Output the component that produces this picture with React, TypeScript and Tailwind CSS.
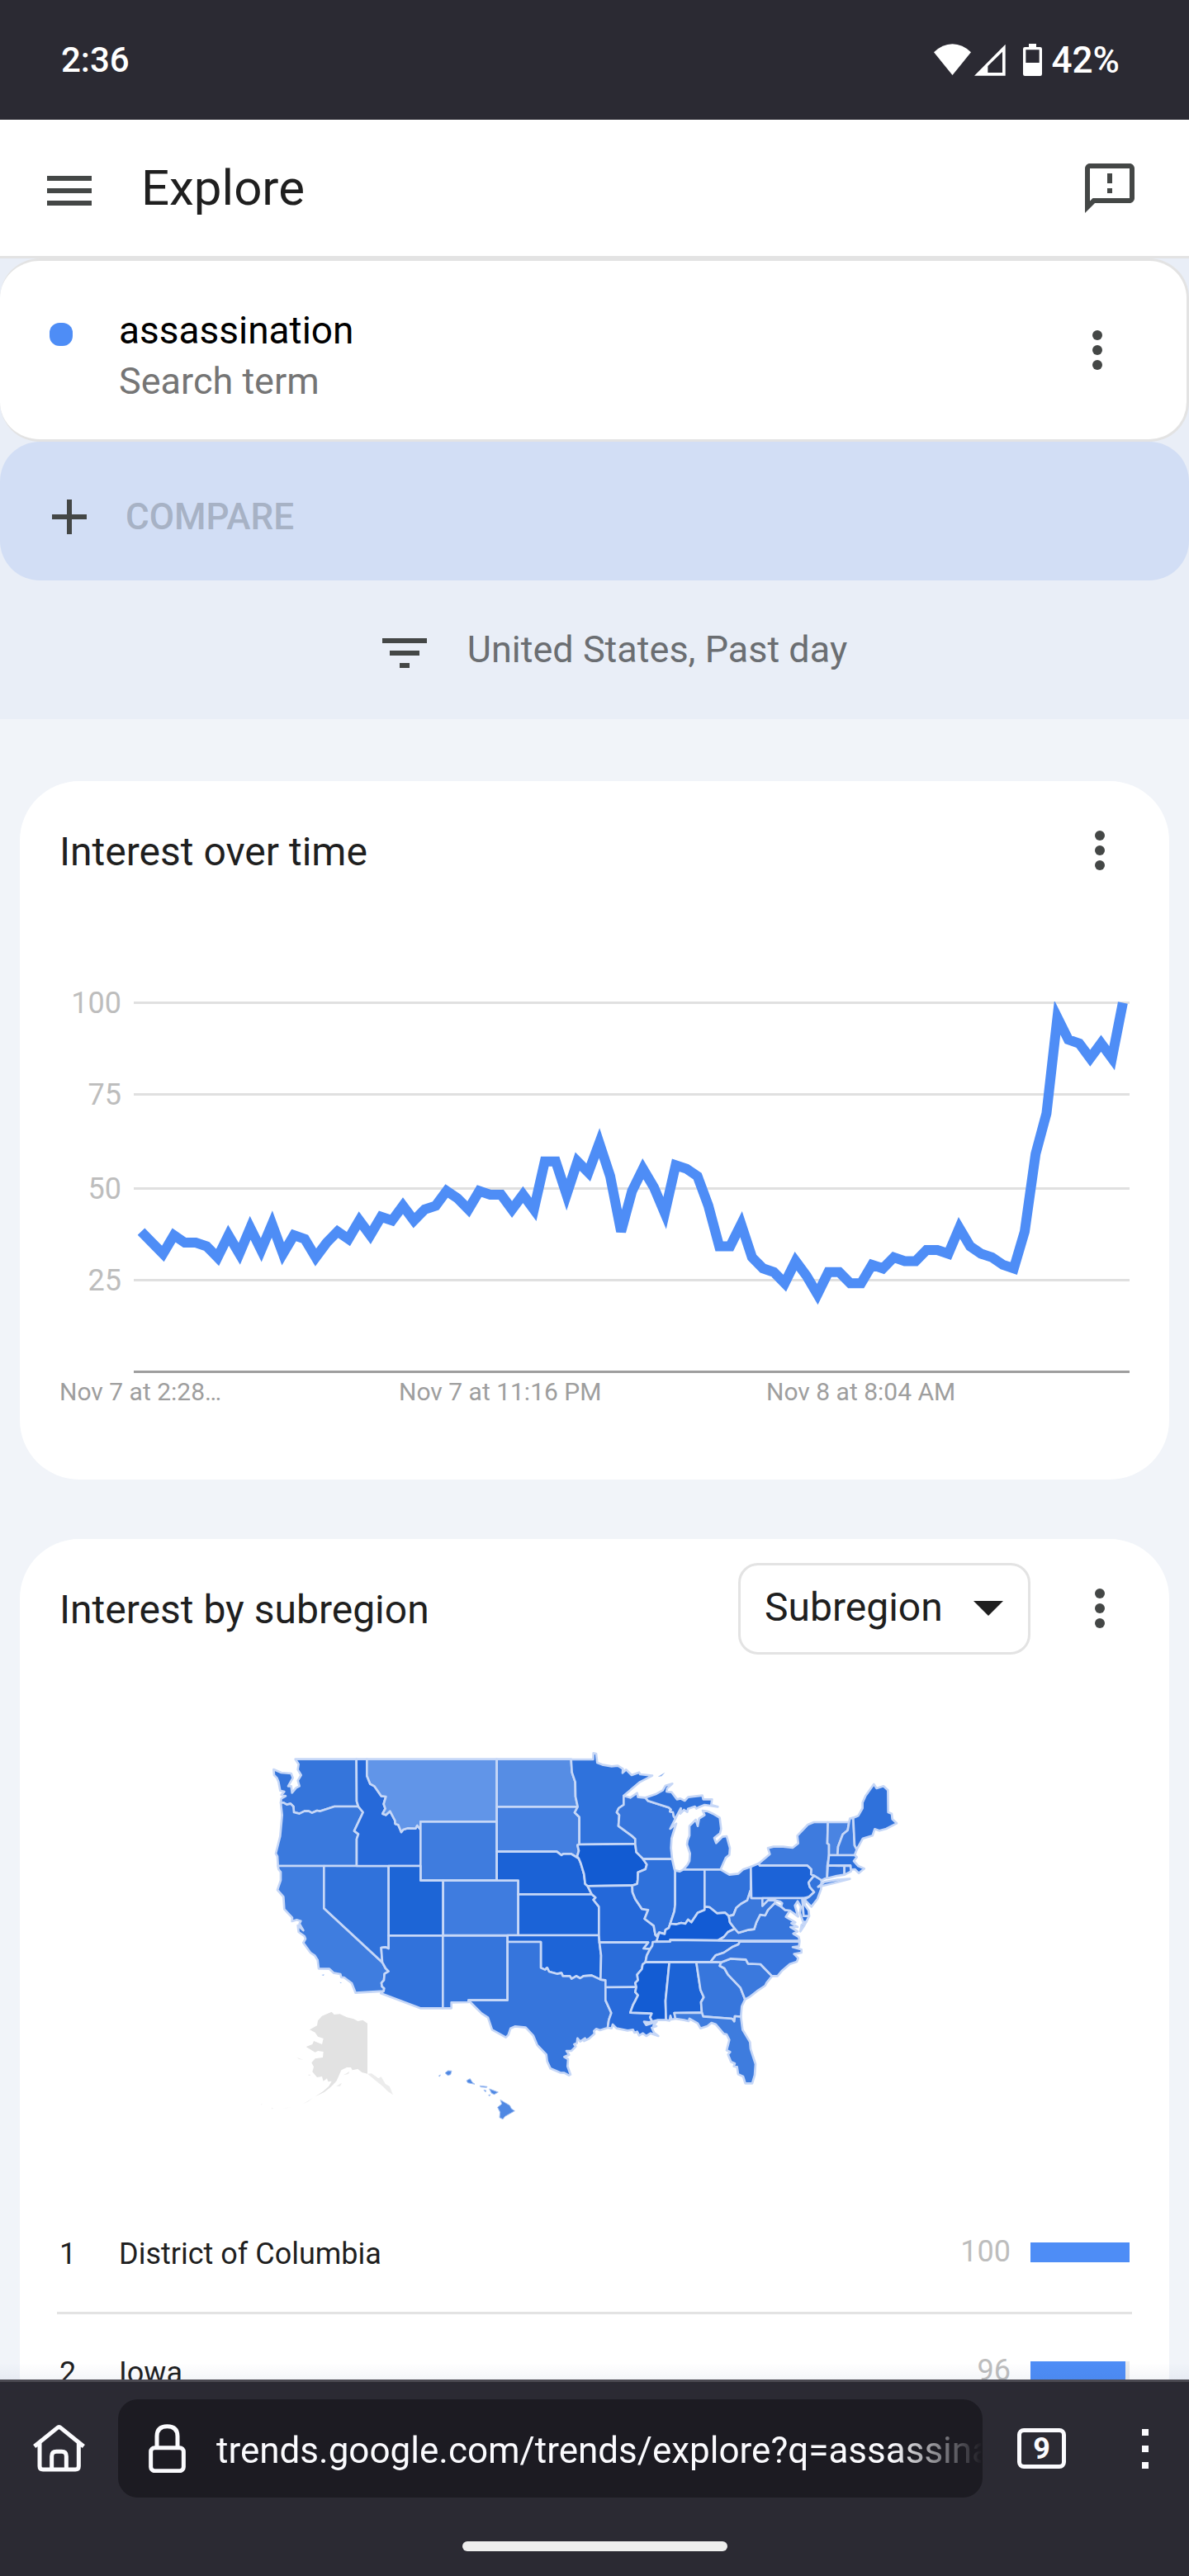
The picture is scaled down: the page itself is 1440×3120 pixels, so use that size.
const interest = [
  38, 35, 32, 37, 35, 35, 34, 31, 37, 32, 39, 33, 40, 32, 37, 36, 31, 35, 38, 36, 41, 37, 42, 41, 45, 41, 44, 45, 49, 47,
  44, 49, 48, 48, 44, 48, 44, 57, 57, 48, 57, 54, 62, 53, 38, 49, 55, 50, 43, 56, 55, 53, 45, 34, 34, 40, 31, 28, 27, 24,
  30, 26, 21, 27, 27, 24, 24, 29, 28, 31, 30, 30, 33, 33, 32, 39, 34, 32, 31, 29, 28, 38, 59, 70, 96, 90, 89, 85, 89, 85,
  100,
];

const gridLines = [
  { value: 100, y: 99 },
  { value: 75, y: 210 },
  { value: 50, y: 324 },
  { value: 25, y: 435 },
];

const timeLabels = [
  { x: 0, text: "Nov 7 at 2:28…" },
  { x: 411, text: "Nov 7 at 11:16 PM" },
  { x: 856, text: "Nov 8 at 8:04 AM" },
];

type Region = { id: string; fill: string; d: string };

const westStates: Region[] = [
  { id: "WA", fill: "#3575db", d: "M143,92 365,92 366,245 372,264 285,264 232,281 222,279 203,287 192,281 176,281 158,290 138,285 136,264 126,254 112,257 100,250 90,250 92,235 108,226 92,222 103,210 88,206 82,175 76,160 66,150 64,129 92,141 128,144 134,160 117,190 128,190 131,214 146,196 158,190 152,170 164,150 152,130 155,110Z" },
  { id: "OR", fill: "#3a79dd", d: "M90,250 100,250 112,257 126,254 136,264 138,285 158,290 176,281 192,281 203,287 222,279 232,281 285,264 372,264 389,285 357,353 372,364 366,382 366,480 80,480 78,445 72,435 88,372 95,295Z" },
  { id: "CA", fill: "#3f7ddf", d: "M80,480 247,480 247,634 459,830 471,852 482,863 467,872 465,895 456,905 458,918 466,925 464,935 362,941 348,906 320,885 310,885 307,873 283,869 267,854 228,853 224,822 214,806 198,795 172,759 180,745 176,735 155,720 152,696 172,714 158,690 163,680 148,676 131,681 132,668 103,637 100,592 78,567 90,532 90,502 82,492Z" },
  { id: "NV", fill: "#3072db", d: "M247,480 482,480 482,780 470,775 455,777 459,830 247,634Z" },
  { id: "ID", fill: "#2669d9", d: "M365,92 403,92 403,152 415,182 430,190 455,226 472,228 464,255 470,272 460,290 472,295 487,281 505,315 506,327 517,331 528,357 535,348 552,343 580,344 586,333 598,348 598,480 366,480 366,382 372,364 357,353 389,285 372,264 366,245Z" },
  { id: "MT", fill: "#6195e8", d: "M403,92 875,92 875,319 598,319 598,348 586,333 580,344 552,343 535,348 528,357 517,331 506,327 505,315 487,281 472,295 460,290 470,272 464,255 472,228 455,226 430,190 415,182 403,152Z" },
  { id: "WY", fill: "#3f7cde", d: "M598,319 875,319 875,533 598,533Z" },
  { id: "UT", fill: "#1d65d6", d: "M482,480 598,480 598,533 680,533 680,733 482,733Z" },
  { id: "CO", fill: "#3f7cdf", d: "M680,533 953,533 953,732 680,732Z" },
  { id: "AZ", fill: "#3172db", d: "M482,733 679,733 679,997 597,997 454,943 464,935 466,925 458,918 456,905 465,895 467,872 482,863 471,852 459,830 455,777 470,775 482,780Z" },
  { id: "NM", fill: "#3575dc", d: "M679,733 914,733 914,968 772,968 772,975 710,976 710,997 679,997Z" },
  { id: "ND", fill: "#568de4", d: "M875,92 1145,92 1148,140 1160,175 1161,228 1169,265 875,265Z" },
  { id: "SD", fill: "#447fe0", d: "M875,265 1169,265 1158,286 1175,302 1175,402 1168,404 1173,425 1167,445 1173,453 1145,436 1117,436 1110,441 1093,428 875,428Z" },
  { id: "NE", fill: "#1b62d6", d: "M875,428 1093,428 1110,441 1117,436 1145,436 1173,453 1180,470 1192,510 1196,545 1205,553 1220,583 953,583 953,533 875,533Z" },
  { id: "KS", fill: "#1b63d7", d: "M953,583 1220,583 1234,595 1226,603 1246,628 1246,732 953,732Z" },
  { id: "OK", fill: "#1d64d7", d: "M914,732 1246,732 1248,758 1254,805 1252,893 1220,878 1190,880 1178,888 1164,880 1147,890 1140,880 1115,880 1110,869 1095,872 1065,864 1058,850 1050,857 1035,850 1035,756 914,756Z" },
  { id: "TX", fill: "#3675dc", d: "M914,756 1035,756 1035,850 1050,857 1058,850 1065,864 1095,872 1110,869 1115,880 1140,880 1147,890 1164,880 1178,888 1190,880 1220,878 1252,893 1270,895 1270,968 1291,1014 1282,1040 1278,1068 1250,1077 1236,1072 1228,1080 1230,1090 1210,1108 1192,1116 1196,1106 1178,1118 1168,1106 1166,1124 1156,1128 1162,1136 1146,1152 1128,1152 1138,1166 1120,1174 1134,1182 1132,1208 1143,1238 1137,1241 1120,1232 1105,1231 1070,1216 1058,1190 1055,1165 1022,1131 1008,1097 980,1067 942,1063 925,1070 917,1094 908,1103 858,1075 843,1031 820,1016 779,975 772,968 914,968Z" },
  { id: "HI", fill: "#4f88e3", d: "M888,1330 905,1340 922,1350 928,1362 940,1370 905,1390 897,1400 885,1394 887,1375 878,1357 893,1345ZM848,1290 864,1296 880,1302 866,1310 856,1306ZM765,1260 778,1253 786,1266 795,1273 770,1268ZM687,1232 698,1224 711,1225 707,1238 697,1241ZM814,1279 840,1282 838,1285 816,1283ZM828,1294 836,1296 834,1301ZM664,1243 670,1239 667,1245ZM845,1313 852,1311 848,1316Z" },
];

const eastStates: Region[] = [
  { id: "MN", fill: "#2f72dc", d: "M-25,93 55,93 56,70 66,72 70,105 88,112 105,115 122,118 145,116 163,127 162,142 175,130 195,150 222,140 226,147 270,152 225,175 172,220 166,225 166,258 148,270 141,285 150,295 147,335 195,370 208,382 208,400 5,402 5,302 -12,286 -1,265 -9,228 -10,175 -22,140Z" },
  { id: "IA", fill: "#125bd2", d: "M5,402 208,400 212,430 235,450 250,475 245,492 218,503 217,530 215,545 197,551 35,553 26,545 22,510 10,470 3,453 -3,445 3,425 -2,404Z" },
  { id: "MO", fill: "#2468d9", d: "M35,553 197,551 198,575 208,600 232,636 255,640 242,672 275,697 281,730 292,740 285,755 272,758 270,770 262,782 238,780 255,758 78,758 76,731 76,628 56,603 64,595 50,583Z" },
  { id: "AR", fill: "#2a6cd9", d: "M78,758 255,758 238,780 262,782 250,805 245,830 235,838 232,855 215,875 218,895 208,905 212,920 100,921 100,895 82,893 84,805Z" },
  { id: "LA", fill: "#276ada", d: "M100,921 212,920 208,938 218,950 208,970 200,985 190,1013 268,1016 262,1030 270,1045 258,1048 240,1046 248,1058 262,1054 286,1046 274,1060 285,1062 268,1068 276,1085 292,1098 264,1088 248,1098 236,1088 222,1096 215,1082 205,1086 200,1075 180,1078 140,1070 126,1056 122,1070 108,1068 112,1040 121,1014 100,968Z" },
  { id: "WI", fill: "#3675dc", d: "M166,225 190,232 215,215 218,230 245,232 255,244 330,268 338,275 334,282 345,285 348,300 354,308 335,345 357,326 346,360 340,380 338,415 342,455 235,453 212,430 208,400 208,382 195,370 147,335 150,295 141,285 148,270 166,258Z" },
  { id: "MI-upper", fill: "#3072db", d: "M245,232 285,218 308,205 318,188 343,181 324,198 322,210 340,212 360,238 372,235 388,243 400,230 452,224 455,238 487,238 484,258 508,265 460,258 440,266 430,272 425,264 400,272 397,284 385,276 372,290 374,270 358,300 354,308 348,300 345,285 334,282 338,275 330,268 255,244Z" },
  { id: "MI-lower", fill: "#3474db", d: "M383,493 398,475 405,462 407,435 396,402 398,388 405,370 405,335 428,312 435,335 440,308 460,295 453,279 472,282 490,290 515,305 520,345 516,362 495,378 502,397 525,374 540,372 552,415 550,440 537,450 518,493Z" },
  { id: "IL", fill: "#2f71db", d: "M235,454 342,455 350,490 353,500 353,620 350,645 335,690 330,705 318,712 315,727 295,722 285,735 281,730 275,697 242,672 255,640 232,636 208,600 198,575 197,551 215,545 217,530 218,503 245,492 250,475Z" },
  { id: "IN", fill: "#266ad9", d: "M353,496 370,500 383,493 460,493 460,640 435,650 412,685 400,675 390,690 375,687 356,692 335,690 350,645 353,620Z" },
  { id: "OH", fill: "#3172db", d: "M460,493 518,493 550,512 583,508 600,493 628,483 628,570 615,605 592,618 575,632 565,658 548,662 535,650 505,652 478,630 460,628Z" },
  { id: "KY", fill: "#125bd4", d: "M335,690 356,692 375,687 390,690 400,675 412,685 435,650 460,640 460,628 478,630 505,652 535,650 548,662 552,685 570,708 545,720 530,738 510,750 335,749 335,755 285,755 295,722 315,727 318,712 330,705Z" },
  { id: "TN", fill: "#2a6dda", d: "M272,756 335,755 335,749 588,752 583,765 560,775 530,795 500,805 482,828 245,830 250,805 262,782 270,770Z" },
  { id: "MS", fill: "#135cd3", d: "M245,830 332,830 318,970 320,1040 290,1040 270,1045 262,1030 268,1016 190,1013 200,985 208,970 218,950 208,938 212,920 208,905 218,895 215,875 232,855 235,838Z" },
  { id: "AL", fill: "#1c63d6", d: "M332,830 430,830 445,930 457,957 447,975 450,1013 350,1014 354,1035 340,1038 336,1024 333,1042 320,1040 318,970Z" },
  { id: "GA", fill: "#3776dc", d: "M430,830 520,830 515,843 532,852 545,875 590,922 607,965 595,990 592,1028 570,1026 568,1045 560,1035 455,1027 450,1013 447,975 457,957 445,930Z" },
  { id: "FL", fill: "#3e7cde", d: "M350,1014 450,1013 455,1027 560,1035 568,1045 570,1026 592,1028 598,1075 625,1120 627,1145 645,1200 642,1240 633,1270 608,1270 600,1245 582,1237 578,1210 566,1208 570,1198 556,1192 545,1165 553,1156 540,1150 550,1112 540,1092 530,1090 500,1055 485,1050 470,1062 445,1070 435,1052 405,1035 402,1044 385,1040 354,1035Z" },
  { id: "SC", fill: "#3b79dd", d: "M520,830 555,817 610,820 618,835 663,837 705,880 685,905 680,915 650,935 625,955 607,965 590,922 545,875 532,852 515,843Z" },
  { id: "NC", fill: "#3775dd", d: "M588,755 805,755 803,772 780,775 812,784 812,795 785,800 800,815 795,828 770,836 740,862 725,880 705,880 663,837 618,835 610,820 555,817 520,830 482,828 500,805 530,795 560,775 583,765Z" },
  { id: "VA", fill: "#3675dc", d: "M510,750 530,738 545,720 570,708 583,723 620,712 640,710 648,685 662,657 680,660 690,640 715,615 738,628 752,640 770,642 755,665 790,685 775,688 798,702 772,702 798,718 782,726 802,738 805,751 588,752ZM830,682 820,700 808,718 812,695Z" },
  { id: "WV", fill: "#3a78dc", d: "M548,662 565,658 575,632 592,618 615,605 626,570 630,597 670,597 670,625 690,605 718,605 715,615 690,640 680,660 662,657 648,685 640,710 620,712 583,723 570,708 552,685Z" },
  { id: "PA", fill: "#1c63d7", d: "M628,483 658,470 660,478 833,478 848,492 847,510 858,515 838,540 842,556 858,575 840,592 820,597 630,597Z" },
  { id: "MD", fill: "#3072db", d: "M670,597 815,597 820,662 840,662 830,682 818,684 806,650 810,628 798,608 788,624 800,664 770,642 752,640 738,628 742,615 735,610 718,605 690,605 670,625Z" },
  { id: "DE", fill: "#2267d8", d: "M815,597 823,597 824,622 838,642 840,662 820,662Z" },
  { id: "NJ", fill: "#3274dc", d: "M858,515 885,530 883,565 870,600 848,628 823,602 840,592 858,575 842,556 838,540Z" },
  { id: "NY", fill: "#3e7bde", d: "M658,470 697,437 690,415 710,410 745,410 780,414 800,398 797,370 835,330 857,321 908,321 906,398 912,402 912,441 906,480 905,522 885,532 858,515 847,510 848,492 833,478 660,478ZM872,556 895,538 945,530 988,527 930,542 890,552Z" },
  { id: "VT", fill: "#4a84e2", d: "M908,321 985,321 980,350 962,365 945,410 943,441 912,441 912,402 906,398Z" },
  { id: "NH", fill: "#3f7de0", d: "M985,321 988,308 1000,305 1005,405 1013,420 1005,441 943,441 945,410 962,365 980,350Z" },
  { id: "ME", fill: "#2f71db", d: "M1000,305 1018,298 1034,270 1034,250 1045,225 1075,183 1085,198 1110,190 1126,205 1127,285 1140,290 1142,310 1158,325 1120,345 1095,352 1078,346 1070,370 1035,380 1013,420 1005,405Z" },
  { id: "MA", fill: "#2c70dc", d: "M912,441 1005,441 1013,448 1002,462 1018,480 1040,490 1020,506 1006,492 990,494 990,478 908,478Z" },
  { id: "CT", fill: "#3172db", d: "M908,478 968,480 968,512 940,516 905,525Z" },
  { id: "RI", fill: "#3172db", d: "M968,480 990,480 992,500 968,512Z" },
];

const subregions = [
  { rank: 1, name: "District of Columbia", value: 100 },
  { rank: 2, name: "Iowa", value: 96 },
];

function MoreButton({ label }: { label: string }) {
  return (
    <button type="button" aria-label={label} className="shrink-0 text-[#444746]">
      <svg viewBox="0 0 24 24" className="size-[72px]" fill="currentColor">
        <circle cx="12" cy="6" r="2" />
        <circle cx="12" cy="12" r="2" />
        <circle cx="12" cy="18" r="2" />
      </svg>
    </button>
  );
}

function StatusBar() {
  return (
    <div className="flex h-[145px] shrink-0 items-center justify-between bg-[#2b2a33] pr-[84px] pl-[74px] font-medium text-white">
      <span className="text-[42px]">2:36</span>
      <div className="flex items-center">
        <svg viewBox="87 99 135 117" className="h-[39px] w-[45px]" fill="currentColor">
          <path d="M154.500 213 87 130Q118 100 154.500 100Q191 100 222 130Z" />
        </svg>
        <svg viewBox="234 99 114 117" className="ml-1 h-[39px] w-[38px]" fill="currentColor" fillRule="evenodd">
          <path d="M347 101V215H234ZM336 128 283 180V204H336Z" />
        </svg>
        <svg viewBox="411 99 69 117" className="mr-3 ml-[21px] h-[39px] w-[23px]" fill="currentColor" fillRule="evenodd">
          <path d="M432 99H459V111H473Q480 111 480 118V209Q480 216 473 216H418Q411 216 411 209V118Q411 111 418 111H432ZM421 121V168H470V121Z" />
        </svg>
        <span className="text-[44px]">42%</span>
      </div>
    </div>
  );
}

function Header() {
  return (
    <header className="flex h-[168px] shrink-0 items-center border-b-3 border-[#e3e3e3] bg-white pr-[60px] pl-12 text-[#444746]">
      <button type="button" aria-label="Main menu" className="pt-1.5">
        <svg viewBox="0 0 24 24" className="size-[72px]" fill="currentColor">
          <path d="M3 18h18v-2H3v2zm0-5h18v-2H3v2zm0-7v2h18V6H3z" />
        </svg>
      </button>
      <h1 className="ml-[51px] flex-1 text-[60px] leading-[72px] text-[#1f1f1f]">Explore</h1>
      <button type="button" aria-label="Send feedback">
        <svg viewBox="0 0 24 24" className="size-[72px]" fill="currentColor">
          <path d="M20 2H4c-1.100 0-1.990.9-1.990 2L2 22l4-4h14c1.100 0 2-.9 2-2V4c0-1.100-.9-2-2-2zm0 14H5.170l-.59.59-.58.58V4h16v12zM11 12h2v2h-2zM11 6h2v4h-2z" />
        </svg>
      </button>
    </header>
  );
}

function SearchPanel() {
  return (
    <section className="bg-[#e9eef7]">
      <div className="flex items-center rounded-[48px] border-3 border-l-0 border-[#e3e3e3] bg-white pr-[72px] pl-[60px]">
        <div className="flex flex-1 gap-14 pt-[53px] pb-[39px]">
          <span className="mt-[22px] size-7 rounded-xl bg-[#4e8df6]" />
          <div className="leading-[62px]">
            <div className="text-[46px] text-black">assassination</div>
            <div className="text-[45px] text-[#757575]">Search term</div>
          </div>
        </div>
        <MoreButton label="Search term options" />
      </div>
      <button
        type="button"
        disabled
        className="flex h-[168px] w-full items-center rounded-[48px] bg-[#d2def5] pt-3.5 pl-12 text-[44px] font-medium text-[#a7b2c5]"
      >
        <svg viewBox="0 0 24 24" className="mr-8 size-[72px] text-[#444746]" fill="currentColor">
          <path d="M19 13h-6v6h-2v-6H5v-2h6V5h2v6h6v2z" />
        </svg>
        COMPARE
      </button>
      <button type="button" className="flex h-[168px] w-full items-center justify-center gap-10 pl-10 text-[45px] text-[#6b6e72]">
        <svg viewBox="0 0 24 24" className="mt-2 size-[72px] text-[#444746]" fill="currentColor">
          <path d="M10 18h4v-2h-4v2zM3 6v2h18V6H3zm3 7h12v-2H6v2z" />
        </svg>
        United States, Past day
      </button>
    </section>
  );
}

function InterestChart() {
  const points = interest.map((v, i) => `${(99 + i * 13.21).toFixed(1)},${(547.5 - v * 4.47).toFixed(1)}`).join(" ");
  return (
    <svg viewBox="0 0 1296 600" className="block h-auto w-full" role="img" aria-label="Interest over time line chart">
      <defs>
        <clipPath id="plot">
          <rect x="90" y="99" width="1206" height="450" />
        </clipPath>
      </defs>
      {gridLines.map((g) => (
        <g key={g.value}>
          <rect x="90" y={g.y} width="1206" height="3" className="fill-[#e0e0e0]" />
          <text x="75" y={g.y + 14} textAnchor="end" className="fill-[#bdbdbd] text-[36px]">
            {g.value}
          </text>
        </g>
      ))}
      <rect x="90" y="546" width="1206" height="3" className="fill-[#9e9e9e]" />
      <polyline points={points} fill="none" strokeWidth="12" clipPath="url(#plot)" className="stroke-[#4e8df6]" />
      {timeLabels.map((l) => (
        <text key={l.text} x={l.x} y="582" className="fill-[#9e9e9e] text-[30px]">
          {l.text}
        </text>
      ))}
    </svg>
  );
}

function StateShapes({ states }: { states: Region[] }) {
  return (
    <>
      {states.map((s) => (
        <path key={s.id} d={s.d} fill={s.fill} />
      ))}
    </>
  );
}

function UsMap() {
  return (
    <svg viewBox="-714 -204 3888 1881" className="block h-auto w-full" role="img" aria-label="Map of interest by state">
      <g fill="#e2e2e2">
        <path d="M275,1010 284,1020 305,1018 330,1030 355,1036 370,1044 388,1040 405,1052 405,1235 385,1230 370,1218 350,1222 345,1212 330,1212 310,1222 300,1245 292,1262 270,1285 248,1302 215,1318 245,1298 265,1280 275,1262 262,1264 258,1252 245,1262 240,1245 222,1248 205,1228 210,1210 202,1195 215,1180 243,1176 245,1155 225,1152 215,1157 200,1148 182,1137 205,1128 210,1116 240,1128 245,1107 225,1100 215,1085 195,1075 222,1060 225,1042 240,1025Z" />
        <path fill="#ececec" d="M405,1235 420,1234 445,1252 455,1246 470,1272 485,1280 498,1312 480,1300 462,1282 445,1268 425,1252ZM292,1280 312,1268 306,1280ZM318,1240 340,1226 336,1236ZM148,1176 172,1184 156,1182ZM188,1238 200,1238 194,1243ZM172,1344 208,1322 190,1336ZM95,1362 130,1356 112,1360ZM56,1358 64,1362 58,1363ZM18,1345 24,1347 19,1348Z" />
      </g>
      <g stroke="#c6d7f7" strokeWidth="8" strokeLinejoin="round">
        <StateShapes states={westStates.slice(0, -1)} />
        <g transform="translate(1170 0)">
          <StateShapes states={eastStates} />
        </g>
      </g>
      <g stroke="#a5c2f3" strokeWidth="3">
        <StateShapes states={westStates.slice(-1)} />
        <path fill="#8fb3f0" stroke="none" d="M238,876 248,874 246,879ZM304,902 312,904 308,906ZM1460,156 1486,140 1474,154Z" />
      </g>
    </svg>
  );
}

function SubregionTable() {
  return (
    <div className="mx-[45px]">
      <table className="w-full border-separate border-spacing-0 text-[36px] text-[#1f1f1f]">
        <tbody>
          {subregions.map((r) => (
            <tr key={r.rank} className="h-36">
              <td className="w-[75px] border-b-3 border-[#e3e3e3] p-0 pl-[3px]">{r.rank}</td>
              <td className="border-b-3 border-[#e3e3e3] p-0">{r.name}</td>
              <td className="border-b-3 border-[#e3e3e3] p-0 pr-6 pb-1.5 text-right text-[#bdbdbd]">{r.value}</td>
              <td className="w-[123px] border-b-3 border-[#e3e3e3] p-0 pr-[3px] pb-1">
                <div className="h-6 bg-[#ececec]">
                  <div className="h-full bg-[#4e8df6]" style={{ width: `${r.value}%` }} />
                </div>
              </td>
            </tr>
          ))}
        </tbody>
      </table>
    </div>
  );
}

function BrowserBar() {
  return (
    <footer className="shrink-0 border-t-3 border-[#4a4951] bg-[#2b2a33] pt-[21px] pb-[30px] text-[#fbfbfe]">
      <div className="flex items-center">
        <button type="button" aria-label="Home" className="flex w-[143px] shrink-0 justify-center">
          <svg viewBox="60 168 189 171" className="h-[57px] w-[63px]" fill="none" stroke="currentColor" strokeWidth="15" strokeLinejoin="round">
            <path d="M65 246 148 179Q154.500 173 161 179L244 246M84 234V318Q84 330 96 330H214Q226 330 226 318V234M128 329V282Q128 265 145 265H164Q181 265 181 282V329" />
          </svg>
        </button>
        <div className="flex h-[119px] min-w-0 flex-1 items-center gap-[37px] rounded-3xl bg-[#1c1b22] pl-[37px]">
          <svg viewBox="480 168 135 177" className="h-[59px] w-[45px] shrink-0" fill="none" stroke="currentColor" strokeWidth="15">
            <path d="M510 254V212Q510 176 547.500 176Q585 176 585 212V254" />
            <rect x="488" y="254" width="119" height="84" rx="14" />
          </svg>
          <input
            type="text"
            aria-label="Address"
            defaultValue="trends.google.com/trends/explore?q=assassination"
            className="min-w-0 flex-1 bg-transparent pt-1 text-[44px] outline-none [mask-image:linear-gradient(to_right,black_calc(100%-110px),transparent)]"
          />
        </div>
        <button
          type="button"
          aria-label="Open tabs"
          className="ml-[42px] flex h-[49px] w-[59px] shrink-0 items-center justify-center rounded-lg border-5 border-current text-[36px] leading-none font-bold"
        >
          9
        </button>
        <button type="button" aria-label="Browser menu" className="mr-[49px] ml-[92px] flex shrink-0 flex-col gap-3">
          <span className="size-2 bg-current" />
          <span className="size-2 bg-current" />
          <span className="size-2 bg-current" />
        </button>
      </div>
      <div className="mx-auto mt-[53px] h-3 w-[321px] rounded-full bg-[#eeeeee]" />
    </footer>
  );
}

export default function App() {
  return (
    <div className="flex h-screen flex-col overflow-hidden bg-[#f1f4f9] font-[Roboto,sans-serif]">
      <StatusBar />
      <Header />
      <main className="relative min-h-0 flex-1 overflow-hidden">
        <SearchPanel />
        <div className="flex flex-col gap-[72px] px-6 pt-[75px]">
          <section className="rounded-[72px] bg-white px-12 pb-[78px]">
            <div className="flex h-[168px] items-center justify-between">
              <h2 className="pt-1 text-[48px] text-[#1f1f1f]">Interest over time</h2>
              <MoreButton label="Interest over time options" />
            </div>
            <InterestChart />
          </section>
          <section className="rounded-[72px] bg-white">
            <div className="flex h-[168px] items-center px-12">
              <h2 className="flex-1 pt-1 text-[48px] text-[#1f1f1f]">Interest by subregion</h2>
              <div className="relative mr-12">
                <select
                  aria-label="Region level"
                  className="h-[111px] w-[354px] appearance-none rounded-3xl border-3 border-[#e3e3e3] bg-white pb-0.5 pl-[29px] text-[48px] text-[#1f1f1f]"
                >
                  <option>Subregion</option>
                  <option>Metro</option>
                  <option>City</option>
                </select>
                <svg viewBox="0 0 36 18" className="pointer-events-none absolute top-[46px] right-[33px] h-[18px] w-9 fill-[#1f1f1f]">
                  <path d="M0 0H36L18 18Z" />
                </svg>
              </div>
              <MoreButton label="Interest by subregion options" />
            </div>
            <div className="px-12">
              <UsMap />
            </div>
            <SubregionTable />
          </section>
        </div>
        <div className="pointer-events-none absolute inset-x-0 bottom-0 h-5 bg-linear-to-b from-transparent to-[#1f3f7f]/5" />
      </main>
      <BrowserBar />
    </div>
  );
}
